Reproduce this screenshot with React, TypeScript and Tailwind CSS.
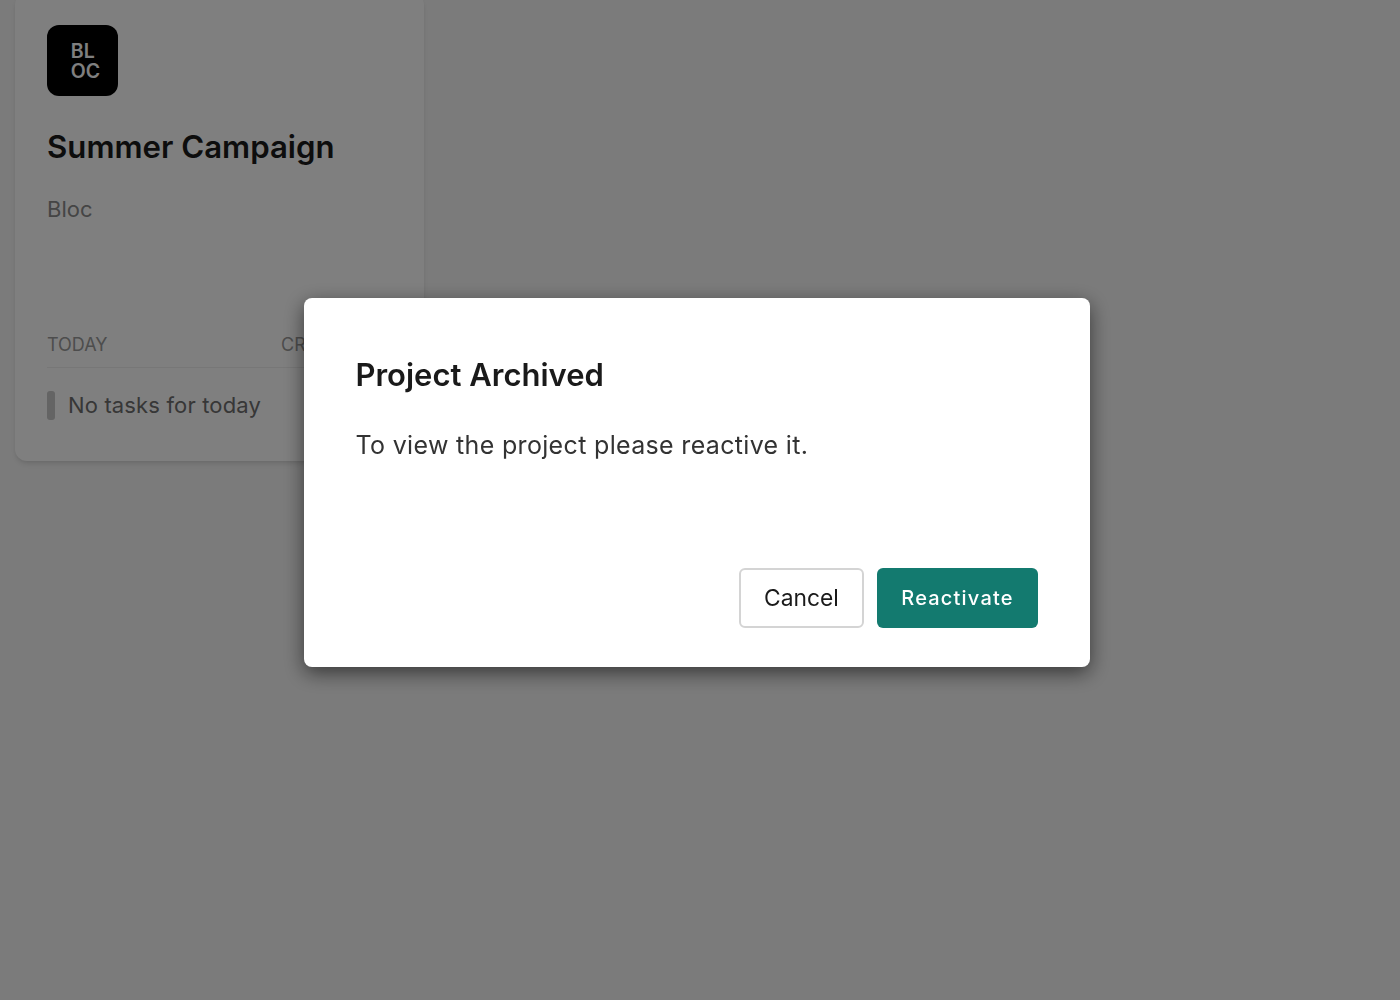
import React from 'react';

const ProjectCard: React.FC = () => {
  return (
    <div className="w-[409px] -mt-[7px] ml-[15px] h-[468px] rounded-xl bg-white p-8 shadow-md flex flex-col">
      <div className="w-[71px] h-[71px] rounded-xl bg-black flex items-center justify-center">
        <span className="block ml-[6px] text-[19.5px] leading-[20px] font-semibold text-white">
          BL<br />OC
        </span>
      </div>
      <h2 className="mt-[30px] text-[31.2px] leading-[42px] font-semibold text-[#1a1a1a]">Summer Campaign</h2>
      <p className="mt-[25px] text-[22px] leading-[32px] text-[#8a8a8a]">Bloc</p>
      <div className="mt-[108px] flex text-[18px] leading-[24px] text-[#9a9a9a] pb-[10px] border-b border-[#eeeeee]">
        <span className="w-[234px]">TODAY</span>
        <span>CREATED</span>
      </div>
      <div className="mt-[21px] flex items-center gap-[13px]">
        <span className="w-2 h-[29px] rounded-[3px] bg-[#c8c8c8]" />
        <span className="text-[22px] tracking-[0.15px] leading-[32px] text-[#6e6e6e]">No tasks for today</span>
      </div>
    </div>
  );
};

const ArchivedDialog: React.FC = () => {
  return (
    <div className="fixed inset-0 bg-black/50 flex items-start pl-[304px] pt-[298px]">
      <div className="w-[786px] h-[369px] rounded-lg bg-white pl-[51.5px] pr-[52px] pt-[55px] pb-[39px] flex flex-col shadow-[0_6px_20px_rgba(0,0,0,0.55)]">
        <h2 className="text-[31px] leading-[44px] font-semibold text-[#1a1a1a]">Project Archived</h2>
        <p className="mt-[30px] text-[25px] tracking-[0.33px] leading-[36px] text-[#333333]">To view the project please reactive it.</p>
        <div className="mt-auto flex justify-end gap-[13px]">
          <button className="w-[125px] h-[60px] rounded-md border-2 border-[#d4d4d4] bg-white text-[22.8px] text-[#1a1a1a]">Cancel</button>
          <button className="w-[161px] h-[60px] rounded-md bg-[#137a6f] text-[20px] font-medium tracking-[1.2px] text-white">Reactivate</button>
        </div>
      </div>
    </div>
  );
};

const App: React.FC = () => {
  return (
    <div className="h-screen overflow-hidden bg-[#f7f7f7] font-['Inter',sans-serif]">
      <ProjectCard />
      <ArchivedDialog />
    </div>
  );
};

export default App;
